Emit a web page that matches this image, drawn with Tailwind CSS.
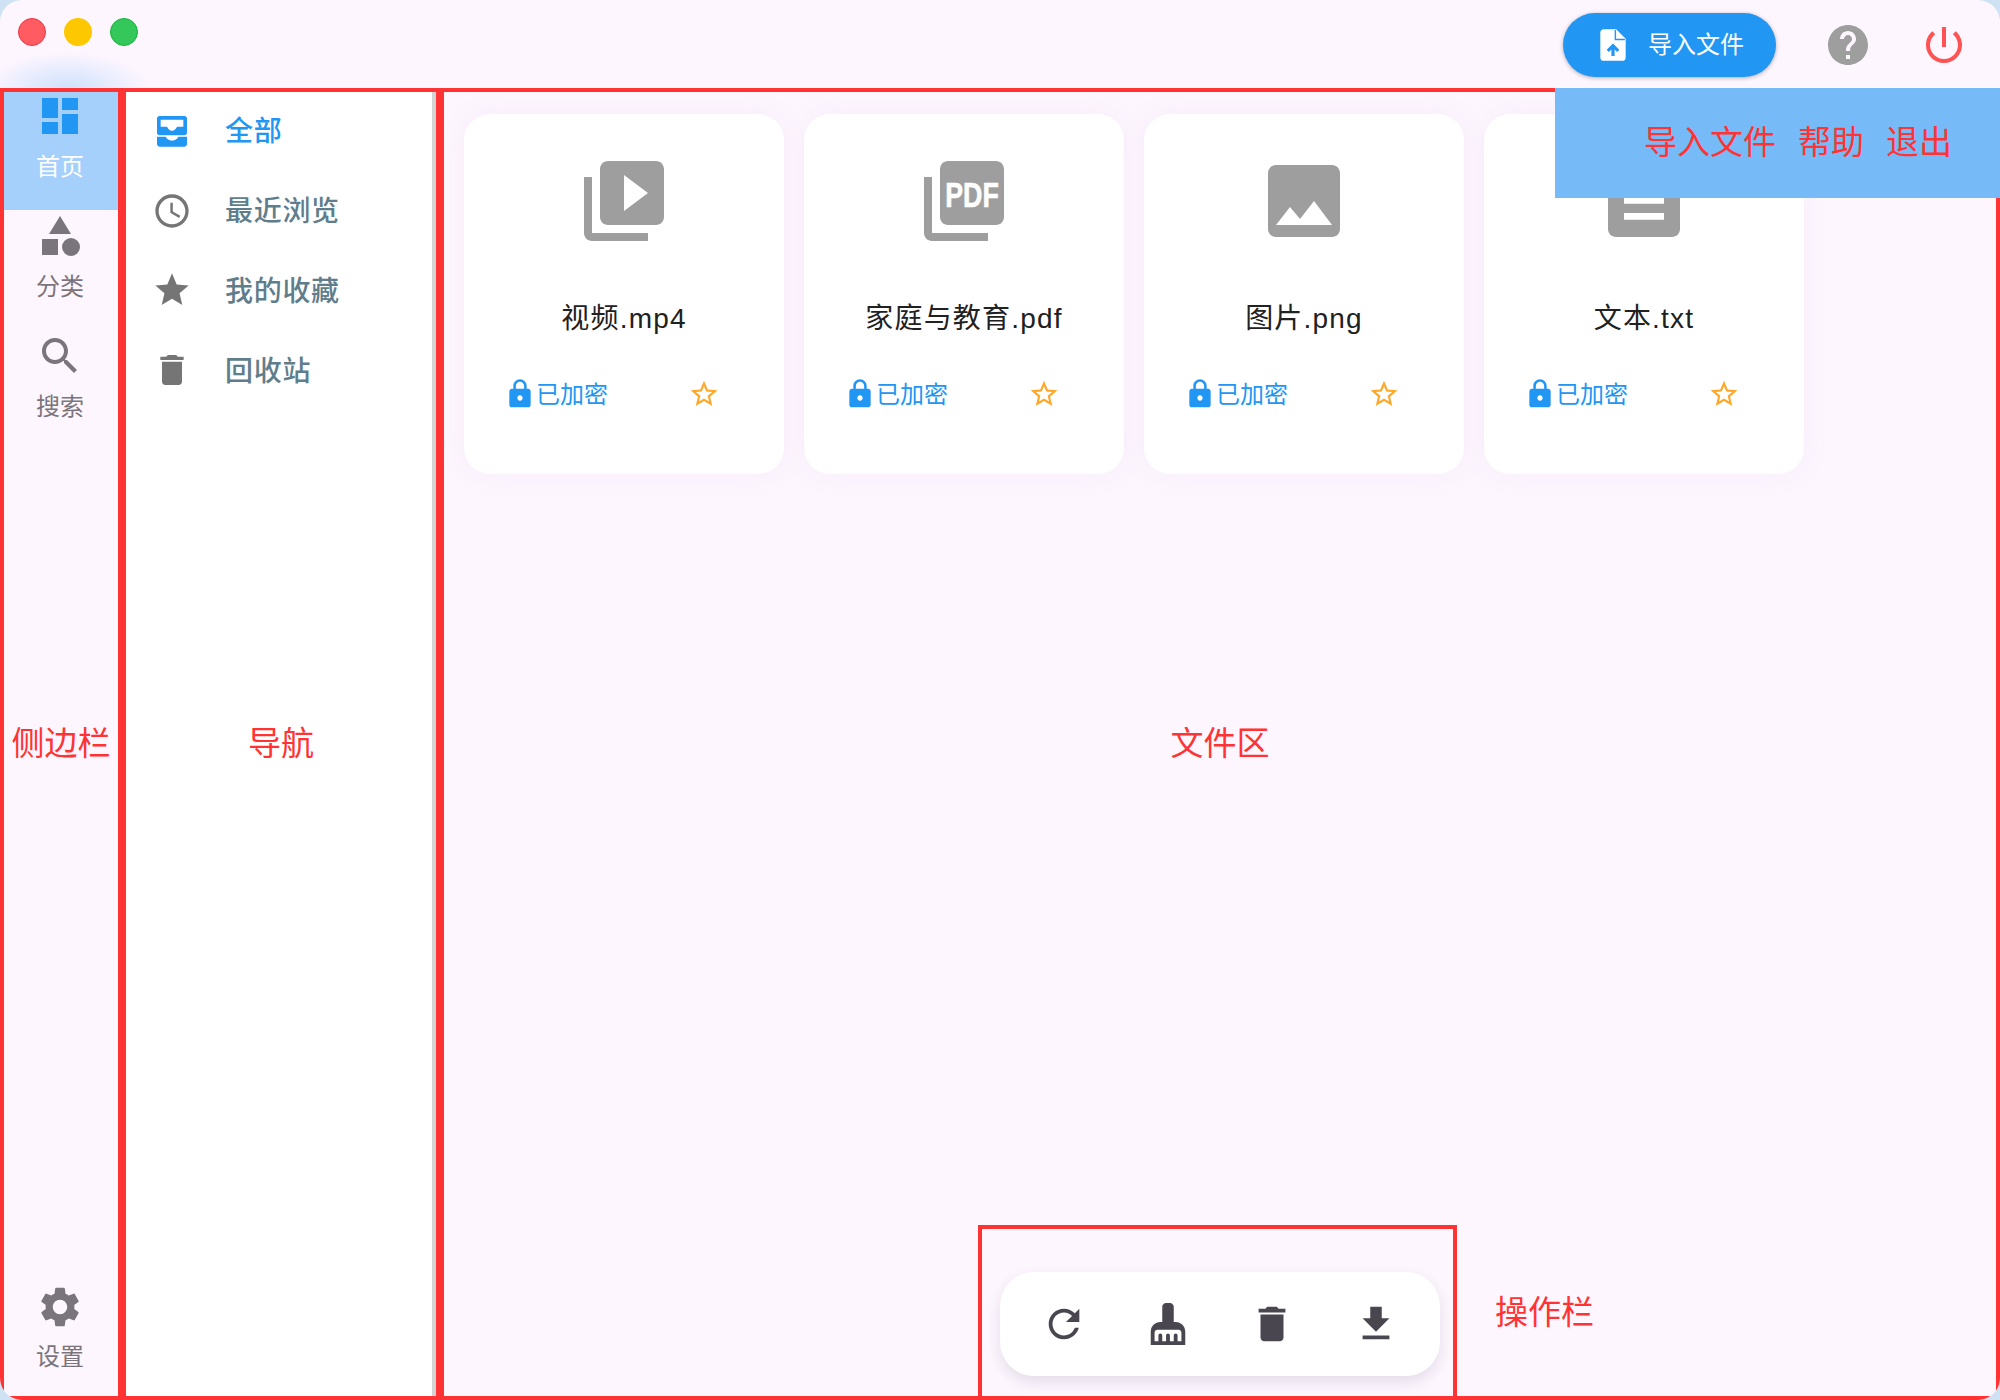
<!DOCTYPE html>
<html lang="zh-CN">
<head>
    <meta charset="UTF-8">
    <title>文件管理</title>
    <script src="https://cdn.jsdelivr.net/npm/@tailwindcss/browser@4"></script>
</head>
<body class="bg-[#cfe2f3] font-['Liberation_Sans','Noto_Sans_CJK_SC',sans-serif]">
<svg class="hidden">
    <symbol id="lock" viewBox="0 0 24 24"><path d="M18 8h-1V6c0-2.76-2.24-5-5-5S7 3.24 7 6v2H6c-1.1 0-2 .9-2 2v10c0 1.1.9 2 2 2h12c1.1 0 2-.9 2-2V10c0-1.1-.9-2-2-2zm-6 9c-1.1 0-2-.9-2-2s.9-2 2-2 2 .9 2 2-.9 2-2 2zm3.1-9H8.9V6c0-1.71 1.39-3.1 3.1-3.1 1.71 0 3.1 1.39 3.1 3.1v2z"/></symbol>
    <symbol id="star-border" viewBox="0 0 24 24"><path d="M22 9.24l-7.19-.62L12 2 9.19 8.63 2 9.24l5.46 4.73L5.82 21 12 17.27 18.18 21l-1.63-7.03L22 9.24zM12 15.4l-3.76 2.27 1-4.28-3.32-2.88 4.38-.38L12 6.1l1.71 4.04 4.38.38-3.32 2.88 1 4.28L12 15.4z"/></symbol>
    <symbol id="trash" viewBox="0 0 24 24"><path d="M6 19c0 1.1.9 2 2 2h8c1.1 0 2-.9 2-2V7H6v12zM19 4h-3.5l-1-1h-5l-1 1H5v2h14V4z"/></symbol>
</svg>

<div class="relative w-[2000px] h-[1400px] overflow-hidden rounded-[22px] bg-[#fef6ff]">
    <!-- title bar -->
    <header class="relative h-[88px] flex justify-between items-start">
        <div class="absolute left-0 bottom-0 w-[150px] h-[36px] bg-[radial-gradient(ellipse_at_45%_100%,rgba(160,205,250,0.5),transparent_72%)]"></div>
        <div class="relative flex gap-[18px] pl-[18px] pt-[18px]">
            <span class="w-[28px] h-[28px] rounded-full bg-[#ff5b63] border border-[#ee3645]"></span>
            <span class="w-[28px] h-[28px] rounded-full bg-[#fdc800]"></span>
            <span class="w-[28px] h-[28px] rounded-full bg-[#34c85a] border border-[#13b53c]"></span>
        </div>
        <div class="flex items-center gap-12 pr-8 pt-[13px]">
            <button class="h-16 w-[213px] flex items-center pl-[31px] gap-[16px] rounded-full bg-[#2196f3] text-white text-2xl shadow-[0_1px_4px_rgba(0,0,0,0.3)]">
                <svg class="w-[38px] h-[38px]" viewBox="0 0 24 24">
                    <path fill="#fff" d="M14 2H6c-1.1 0-2 .9-2 2v16c0 1.1.9 2 2 2h12c1.1 0 2-.9 2-2V8l-6-6z"/>
                    <path fill="none" stroke="#2196f3" stroke-width=".9" d="M13.5 2.5v6h6"/>
                    <path fill="#2196f3" d="M12 11l-4 4 1.4 1.4 1.6-1.6V19h2v-4.2l1.6 1.6L16 15z"/>
                </svg>
                <span>导入文件</span>
            </button>
            <svg class="w-12 h-12 fill-[#9e9e9e]" viewBox="0 0 24 24"><path d="M12 2C6.48 2 2 6.48 2 12s4.48 10 10 10 10-4.48 10-10S17.52 2 12 2zm1 17h-2v-2h2v2zm2.07-7.75l-.9.92C13.45 12.9 13 13.5 13 15h-2v-.5c0-1.1.45-2.1 1.17-2.83l1.24-1.26c.37-.36.59-.86.59-1.41 0-1.1-.9-2-2-2s-2 .9-2 2H8c0-2.21 1.79-4 4-4s4 1.79 4 4c0 .88-.36 1.68-.93 2.25z"/></svg>
            <svg class="w-12 h-12 fill-[#ff5252]" viewBox="0 0 24 24"><path d="M13 3h-2v10h2V3zm4.83 2.17l-1.42 1.42C17.99 7.86 19 9.81 19 12c0 3.87-3.13 7-7 7s-7-3.13-7-7c0-2.19 1.01-4.14 2.58-5.42L6.17 5.17C4.23 6.82 3 9.26 3 12c0 4.97 4.03 9 9 9s9-4.03 9-9c0-2.74-1.23-5.18-3.17-6.83z"/></svg>
        </div>
    </header>

    <!-- annotation over the top right -->
    <div class="absolute z-10 top-[88px] right-0 w-[445px] h-[110px] bg-[#76baf8] flex items-center justify-end gap-[22px] pr-[48px] text-[33px] text-[#ff3333]">
        <span>导入文件</span>
        <span>帮助</span>
        <span>退出</span>
    </div>

    <div class="flex h-[1312px]">
        <!-- sidebar -->
        <aside class="relative w-[122px] border-4 border-[#ff3333] bg-[#fdf6fe] flex flex-col text-2xl text-[#7a757c]">
            <a class="h-[118px] mb-[2px] pr-[2px] bg-[#a4d0fb] flex flex-col items-center text-white">
                <svg class="w-12 h-12 fill-[#2196f3] shrink-0" viewBox="0 0 24 24"><path d="M3 13h8V3H3v10zm0 8h8v-6H3v6zm10 0h8V11h-8v10zm0-18v6h8V3h-8z"/></svg>
                <span class="mt-[11px] leading-8">首页</span>
            </a>
            <a class="h-[120px] pr-[2px] flex flex-col items-center">
                <svg class="w-12 h-12 fill-[#7a757c] shrink-0" viewBox="0 0 24 24"><path d="M12 2l-5.5 9h11z"/><circle cx="17.5" cy="17.5" r="4.5"/><path d="M3 13.5h8v8H3z"/></svg>
                <span class="mt-[11px] leading-8">分类</span>
            </a>
            <a class="h-[120px] pr-[2px] flex flex-col items-center">
                <svg class="w-12 h-12 fill-[#7a757c] shrink-0" viewBox="0 0 24 24"><path d="M15.5 14h-.79l-.28-.27C15.41 12.59 16 11.11 16 9.5 16 5.91 13.09 3 9.5 3S3 5.91 3 9.5 5.91 16 9.5 16c1.61 0 3.09-.59 4.23-1.57l.27.28v.79l5 4.99L20.49 19l-4.99-5zm-6 0C7.01 14 5 11.99 5 9.5S7.01 5 9.5 5 14 7.01 14 9.5 11.99 14 9.5 14z"/></svg>
                <span class="mt-[11px] leading-8">搜索</span>
            </a>
            <a class="mt-auto pb-[23px] pr-[2px] flex flex-col items-center">
                <svg class="w-12 h-12 fill-[#7a757c] shrink-0" viewBox="0 0 24 24"><path d="M19.14 12.94c.04-.3.06-.61.06-.94 0-.32-.02-.64-.07-.94l2.03-1.58c.18-.14.23-.41.12-.61l-1.92-3.32c-.12-.22-.37-.29-.59-.22l-2.39.96c-.5-.38-1.03-.7-1.62-.94l-.36-2.54c-.04-.24-.24-.41-.48-.41h-3.84c-.24 0-.43.17-.47.41l-.36 2.54c-.59.24-1.13.57-1.62.94l-2.39-.96c-.22-.08-.47 0-.59.22L2.74 8.87c-.12.21-.08.47.12.61l2.03 1.58c-.05.3-.09.63-.09.94s.02.64.07.94l-2.03 1.58c-.18.14-.23.41-.12.61l1.92 3.32c.12.22.37.29.59.22l2.39-.96c.5.38 1.03.7 1.62.94l.36 2.54c.05.24.24.41.48.41h3.84c.24 0 .44-.17.47-.41l.36-2.54c.59-.24 1.13-.56 1.62-.94l2.39.96c.22.08.47 0 .59-.22l1.92-3.32c.12-.22.07-.47-.12-.61l-2.01-1.58zM12 15.6c-1.98 0-3.6-1.62-3.6-3.6s1.62-3.6 3.6-3.6 3.6 1.62 3.6 3.6-1.62 3.6-3.6 3.6z"/></svg>
                <span class="mt-2.5 leading-8">设置</span>
            </a>
            <div class="absolute inset-0 flex items-center justify-center text-[33px] text-[#ff3333] whitespace-nowrap">侧边栏</div>
        </aside>

        <!-- nav -->
        <nav class="relative w-[318px] border-4 border-[#ff3333]">
            <div class="h-full bg-white border-r-4 border-[#d4d4d4] flex flex-col pl-[26px] text-[28px] tracking-[0.7px] font-medium text-[#607d8b]">
                <a class="h-20 flex items-center gap-[33px] text-[#2196f3]">
                    <svg class="w-10 h-10 -mt-[3px] fill-[#2196f3]" viewBox="0 0 24 24"><path fill-rule="evenodd" d="M4.5 3h15c.8 0 1.5.7 1.5 1.5v8.500c0 .8-.7 1.500-1.500 1.500h-15c-.8 0-1.500-.7-1.500-1.500V4.500C3 3.700 3.700 3 4.500 3zM5.200 5.200V9.500h3.800c.6 1.400 1.600 2.400 3 2.400s2.400-1 3-2.400h3.800V5.200z"/><path d="M3 15.500h5.200c.6 1.400 2 2.300 3.800 2.300s3.200-.9 3.800-2.300H21v4.200c0 1-.8 1.800-1.800 1.800H4.800c-1 0-1.800-.8-1.800-1.800z"/></svg>
                    <span>全部</span>
                </a>
                <a class="h-20 flex items-center gap-[33px]">
                    <svg class="w-10 h-10 -mt-[3px] fill-[#757575]" viewBox="0 0 24 24"><path d="M11.990 2C6.470 2 2 6.480 2 12s4.470 10 9.990 10C17.520 22 22 17.520 22 12S17.520 2 11.990 2zM12 20c-4.420 0-8-3.580-8-8s3.580-8 8-8 8 3.580 8 8-3.580 8-8 8zm.5-13H11v6l5.250 3.150.75-1.230-4.500-2.670z"/></svg>
                    <span>最近浏览</span>
                </a>
                <a class="h-20 flex items-center gap-[33px]">
                    <svg class="w-10 h-10 -mt-[5px] fill-[#757575]" viewBox="0 0 24 24"><path d="M12 17.270L18.180 21l-1.640-7.030L22 9.240l-7.190-.61L12 2 9.190 8.630 2 9.240l5.460 4.730L5.820 21z"/></svg>
                    <span>我的收藏</span>
                </a>
                <a class="h-20 flex items-center gap-[33px]">
                    <svg class="w-10 h-10 -mt-[5px] fill-[#757575]"><use href="#trash"/></svg>
                    <span>回收站</span>
                </a>
            </div>
            <div class="absolute inset-0 flex items-center justify-center text-[33px] font-normal text-[#ff3333]">导航</div>
        </nav>

        <!-- files -->
        <main class="relative flex-1 border-4 border-[#ff3333] bg-[#fdf6fe] pl-5 pt-[22px] flex gap-5 items-start">
            <article class="w-80 h-[360px] bg-white rounded-[26px] shadow-[0_0_24px_rgba(190,150,210,0.1)] flex flex-col items-center pt-[39px]">
                <svg class="w-24 h-24 fill-[#9e9e9e]" viewBox="0 0 24 24"><path d="M4 6H2v14c0 1.100.9 2 2 2h14v-2H4V6zm16-4H8c-1.100 0-2 .9-2 2v12c0 1.100.9 2 2 2h12c1.100 0 2-.9 2-2V4c0-1.100-.9-2-2-2zm-8 12.500v-9l6 4.500-6 4.500z"/></svg>
                <div class="mt-[50px] h-10 leading-10 text-[28px] tracking-[1.2px] text-[#212121]">视频.mp4</div>
                <div class="mt-[38px] w-full pl-10 pr-16 flex items-center justify-between">
                    <div class="flex items-center text-2xl text-[#2196f3]"><svg class="w-8 h-8 fill-[#2196f3]"><use href="#lock"/></svg><span class="mt-[2px]">已加密</span></div>
                    <svg class="w-8 h-8 fill-[#ffa726]"><use href="#star-border"/></svg>
                </div>
            </article>
            <article class="w-80 h-[360px] bg-white rounded-[26px] shadow-[0_0_24px_rgba(190,150,210,0.1)] flex flex-col items-center pt-[39px]">
                <svg class="w-24 h-24 fill-[#9e9e9e]" viewBox="0 0 24 24">
                    <path d="M4 6H2v14c0 1.100.9 2 2 2h14v-2H4V6zm16-4H8c-1.100 0-2 .9-2 2v12c0 1.100.9 2 2 2h12c1.100 0 2-.9 2-2V4c0-1.100-.9-2-2-2z"/>
                    <text x="7.300" y="13.500" font-size="8.700" font-weight="700" fill="#fff" stroke="#fff" stroke-width=".15" textLength="13.400" lengthAdjust="spacingAndGlyphs">PDF</text>
                </svg>
                <div class="mt-[50px] h-10 leading-10 text-[28px] tracking-[1.2px] text-[#212121]">家庭与教育.pdf</div>
                <div class="mt-[38px] w-full pl-10 pr-16 flex items-center justify-between">
                    <div class="flex items-center text-2xl text-[#2196f3]"><svg class="w-8 h-8 fill-[#2196f3]"><use href="#lock"/></svg><span class="mt-[2px]">已加密</span></div>
                    <svg class="w-8 h-8 fill-[#ffa726]"><use href="#star-border"/></svg>
                </div>
            </article>
            <article class="w-80 h-[360px] bg-white rounded-[26px] shadow-[0_0_24px_rgba(190,150,210,0.1)] flex flex-col items-center pt-[39px]">
                <svg class="w-24 h-24 fill-[#9e9e9e]" viewBox="0 0 24 24"><path d="M21 19V5c0-1.100-.9-2-2-2H5c-1.100 0-2 .9-2 2v14c0 1.100.9 2 2 2h14c1.100 0 2-.9 2-2zM8.500 13.500l2.500 3.010L14.500 12l4.500 6H5l3.500-4.500z"/></svg>
                <div class="mt-[50px] h-10 leading-10 text-[28px] tracking-[1.2px] text-[#212121]">图片.png</div>
                <div class="mt-[38px] w-full pl-10 pr-16 flex items-center justify-between">
                    <div class="flex items-center text-2xl text-[#2196f3]"><svg class="w-8 h-8 fill-[#2196f3]"><use href="#lock"/></svg><span class="mt-[2px]">已加密</span></div>
                    <svg class="w-8 h-8 fill-[#ffa726]"><use href="#star-border"/></svg>
                </div>
            </article>
            <article class="w-80 h-[360px] bg-white rounded-[26px] shadow-[0_0_24px_rgba(190,150,210,0.1)] flex flex-col items-center pt-[39px]">
                <svg class="w-24 h-24 fill-[#9e9e9e]" viewBox="0 0 24 24"><path fill-rule="evenodd" d="M19 3H5c-1.100 0-2 .9-2 2v14c0 1.100.9 2 2 2h14c1.100 0 2-.9 2-2V5c0-1.100-.9-2-2-2zM7 15h10v1.700H7zM7 11h10v1.700H7zM7 7h10v1.700H7z"/></svg>
                <div class="mt-[50px] h-10 leading-10 text-[28px] tracking-[1.2px] text-[#212121]">文本.txt</div>
                <div class="mt-[38px] w-full pl-10 pr-16 flex items-center justify-between">
                    <div class="flex items-center text-2xl text-[#2196f3]"><svg class="w-8 h-8 fill-[#2196f3]"><use href="#lock"/></svg><span class="mt-[2px]">已加密</span></div>
                    <svg class="w-8 h-8 fill-[#ffa726]"><use href="#star-border"/></svg>
                </div>
            </article>

            <div class="absolute inset-0 flex items-center justify-center text-[33px] text-[#ff3333] pointer-events-none">文件区</div>

            <!-- action bar -->
            <div class="absolute left-[534px] bottom-0 w-[479px] h-[171px] border-4 border-b-0 border-[#ff3333] pl-[18px] pt-[43px]">
                <div class="w-[440px] h-[104px] bg-white rounded-[34px] shadow-[0_6px_14px_rgba(60,40,80,0.12)] grid grid-cols-4 items-center justify-items-center px-3">
                    <svg class="w-[46px] h-[46px] fill-[#4a4650]" viewBox="0 0 24 24"><path d="M17.650 6.350C16.200 4.900 14.210 4 12 4c-4.420 0-7.990 3.580-7.990 8s3.570 8 7.990 8c3.730 0 6.840-2.550 7.730-6h-2.080c-.82 2.330-3.040 4-5.650 4-3.310 0-6-2.690-6-6s2.690-6 6-6c1.660 0 3.140.69 4.220 1.780L13 11h7V4l-2.350 2.350z"/></svg>
                    <svg class="w-[46px] h-[46px] fill-[#4a4650]" viewBox="0 0 24 24"><path fill-rule="evenodd" d="M16 11h-1V3c0-1.100-.9-2-2-2h-2c-1.100 0-2 .9-2 2v8H8c-2.760 0-5 2.240-5 5v7h18v-7c0-2.760-2.240-5-5-5zm3 10h-2v-3c0-.55-.45-1-1-1s-1 .45-1 1v3h-2v-3c0-.55-.45-1-1-1s-1 .45-1 1v3H9v-3c0-.55-.45-1-1-1s-1 .45-1 1v3H5v-4.500c0-.8.7-1.500 1.500-1.500h11c.8 0 1.500.7 1.500 1.500z"/></svg>
                    <svg class="w-[46px] h-[46px] fill-[#4a4650]"><use href="#trash"/></svg>
                    <svg class="w-[46px] h-[46px] fill-[#4a4650]" viewBox="0 0 24 24"><path d="M19 9h-4V3H9v6H5l7 7 7-7zM5 18v2h14v-2H5z"/></svg>
                </div>
            </div>
            <div class="absolute left-[1051px] bottom-[63px] text-[33px] leading-10 text-[#ff3333]">操作栏</div>
        </main>
    </div>
</div>
</body>
</html>
